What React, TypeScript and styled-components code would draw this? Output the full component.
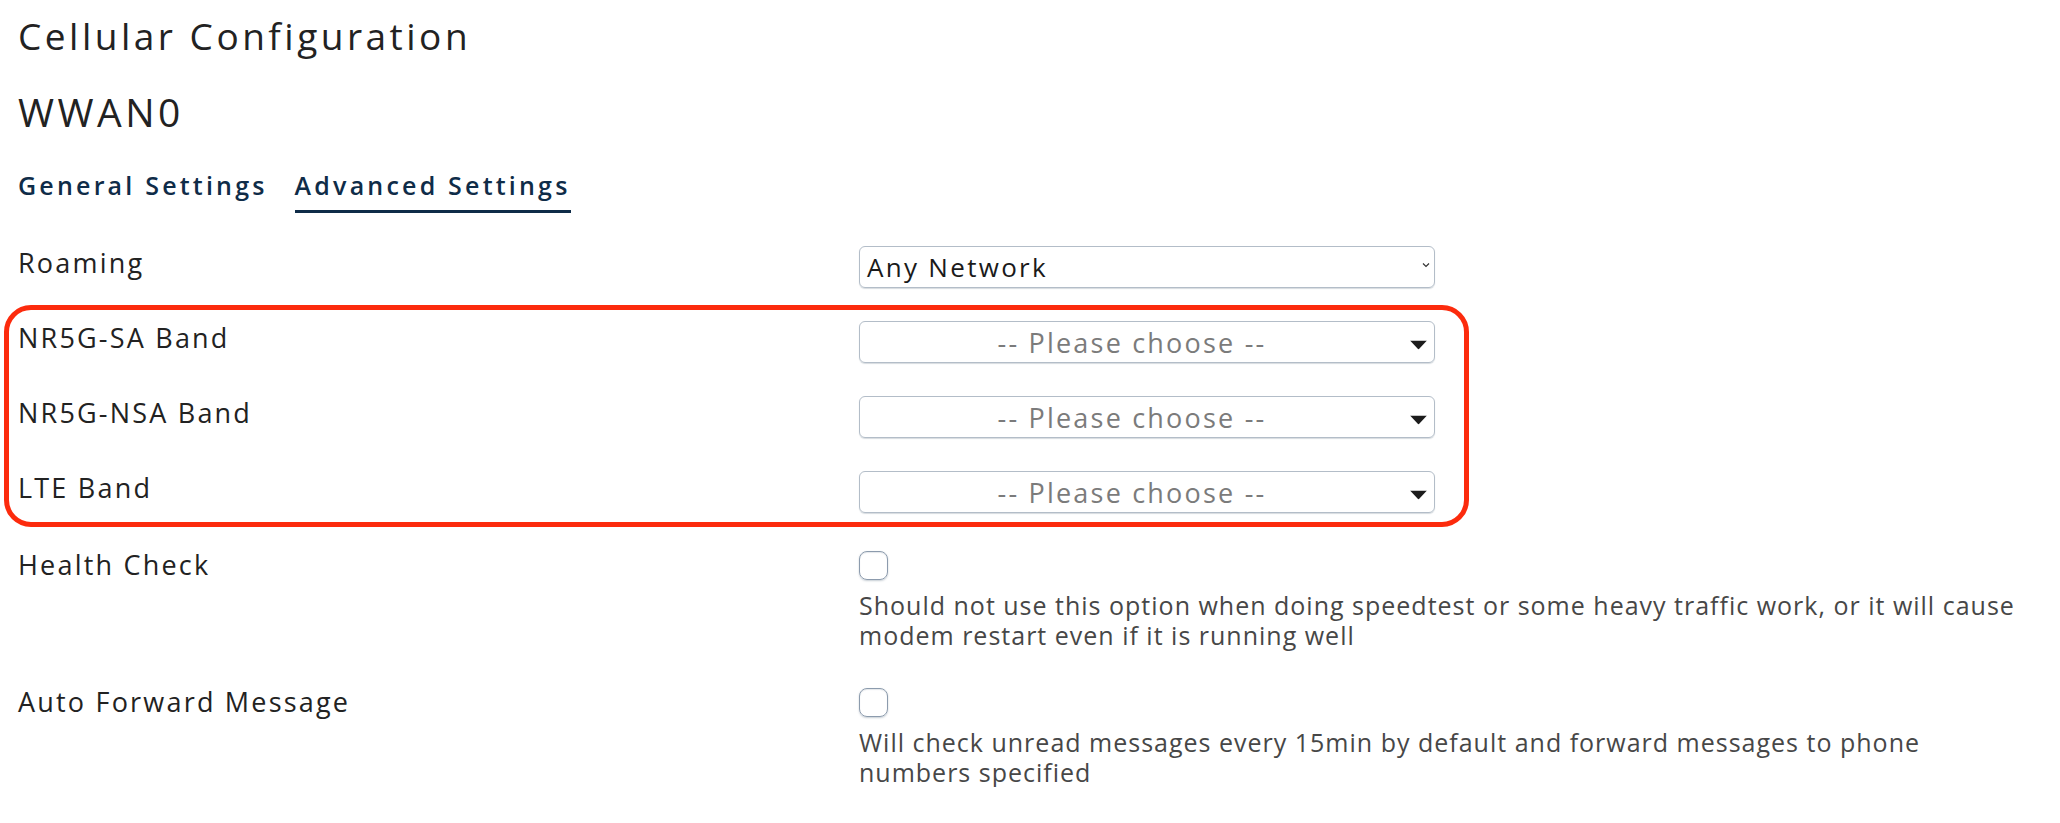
import React from "react";
import styled, { createGlobalStyle } from "styled-components";

const Global = createGlobalStyle`
  html, body { margin: 0; padding: 0; background: #fff; }
  body { font-family: "Open Sans", "Noto Sans", sans-serif; color: #222; }
  * { box-sizing: border-box; }
`;

const Page = styled.div`
  padding: 0 18px;
  width: 2060px;
`;

const Title = styled.h1`
  margin: 0;
  padding-top: 15px;
  font-size: 37px;
  line-height: 42px;
  font-weight: 400;
  letter-spacing: 3.5px;
  color: #222;
`;

const Subtitle = styled.h2`
  margin: 0;
  margin-top: 34px;
  font-size: 39px;
  line-height: 42px;
  font-weight: 500;
  letter-spacing: 3.5px;
  color: #222;
`;

const Tabs = styled.div`
  display: flex;
  gap: 27px;
  margin-top: 36px;
`;

const Tab = styled.div<{ $active?: boolean }>`
  font-size: 25px;
  font-weight: 600;
  letter-spacing: 3.2px;
  color: #0f2c48;
  line-height: 32px;
  padding-bottom: 9px;
  border-bottom: 3px solid ${(p) => (p.$active ? "#0f2c48" : "transparent")};
`;

const Form = styled.div`
  margin-top: 33px;
  display: flex;
  flex-direction: column;
  gap: 33px;
`;

const Highlight = styled.div`
  position: relative;
  display: flex;
  flex-direction: column;
  gap: 33px;
  &::before {
    content: "";
    position: absolute;
    top: -16px;
    bottom: -14px;
    left: -14px;
    width: 1455px;
    border: 5px solid #fc2b0d;
    border-radius: 27px;
    pointer-events: none;
  }
`;

const Row = styled.div<{ $check?: boolean }>`
  display: grid;
  grid-template-columns: 841px 1fr;
  align-items: start;
  margin-top: ${(p) => (p.$check ? "2px" : "0")};
`;

const Label = styled.div`
  font-size: 27px;
  line-height: 34px;
  letter-spacing: 2.2px;
  color: #222;
`;

const Control = styled.div`
  display: flex;
  flex-direction: column;
`;

const SelectBox = styled.div<{ $placeholder?: boolean }>`
  position: relative;
  width: 576px;
  height: 42px;
  border: 1px solid #b3bdc8;
  border-radius: 6px;
  display: flex;
  align-items: center;
  font-size: ${(p) => (p.$placeholder ? "27px" : "26px")};
  letter-spacing: ${(p) => (p.$placeholder ? "2.2px" : "2.3px")};
  padding: ${(p) => (p.$placeholder ? "0 30px 0 0" : "0 0 0 7px")};
  justify-content: ${(p) => (p.$placeholder ? "center" : "flex-start")};
  color: ${(p) => (p.$placeholder ? "#7b7b7b" : "#1a1a1a")};
  box-shadow: 0 1px 1px rgba(120, 135, 150, 0.3);
`;

const Arrow = styled.svg`
  position: absolute;
  top: 50%;
  transform: translateY(-50%);
`;

const Checkbox = styled.div`
  width: 29px;
  height: 29px;
  margin-top: 3px;
  border: 1.5px solid #8c9bad;
  border-radius: 8px;
  box-shadow: 0 1px 2px rgba(90, 110, 130, 0.35), inset 0 1px 1px rgba(120, 135, 150, 0.2);
`;

const Help = styled.div`
  margin-top: 10px;
  font-size: 25px;
  line-height: 30px;
  letter-spacing: 1px;
  color: #474747;
  max-width: 1162px;
`;

const Chevron = () => (
  <Arrow width="8" height="6" viewBox="0 0 8 6" style={{ right: 4, marginTop: -2 }}>
    <path d="M1 1.5 L4 4.5 L7 1.5" fill="none" stroke="#333" strokeWidth="1.2" />
  </Arrow>
);

const Caret = () => (
  <Arrow width="17" height="9" viewBox="0 0 17 9" style={{ right: 7, marginTop: 3 }}>
    <path d="M0 0 H17 L8.5 9 Z" fill="#1c1c1c" />
  </Arrow>
);

const PlaceholderSelect = () => (
  <SelectBox $placeholder>
    -- Please choose --
    <Caret />
  </SelectBox>
);

export default function App() {
  return (
    <Page>
      <Global />
      <Title>Cellular Configuration</Title>
      <Subtitle>WWAN0</Subtitle>
      <Tabs>
        <Tab>General Settings</Tab>
        <Tab $active>Advanced Settings</Tab>
      </Tabs>
      <Form>
        <Row>
          <Label>Roaming</Label>
          <Control>
            <SelectBox>
              Any Network
              <Chevron />
            </SelectBox>
          </Control>
        </Row>
        <Highlight>
          <Row>
            <Label>NR5G-SA Band</Label>
            <Control>
              <PlaceholderSelect />
            </Control>
          </Row>
          <Row>
            <Label>NR5G-NSA Band</Label>
            <Control>
              <PlaceholderSelect />
            </Control>
          </Row>
          <Row>
            <Label>LTE Band</Label>
            <Control>
              <PlaceholderSelect />
            </Control>
          </Row>
        </Highlight>
        <Row $check>
          <Label>Health Check</Label>
          <Control>
            <Checkbox />
            <Help>
              Should not use this option when doing speedtest or some heavy traffic work, or it will cause modem
              restart even if it is running well
            </Help>
          </Control>
        </Row>
        <Row $check>
          <Label>Auto Forward Message</Label>
          <Control>
            <Checkbox />
            <Help>
              Will check unread messages every 15min by default and forward messages to phone numbers specified
            </Help>
          </Control>
        </Row>
      </Form>
    </Page>
  );
}
